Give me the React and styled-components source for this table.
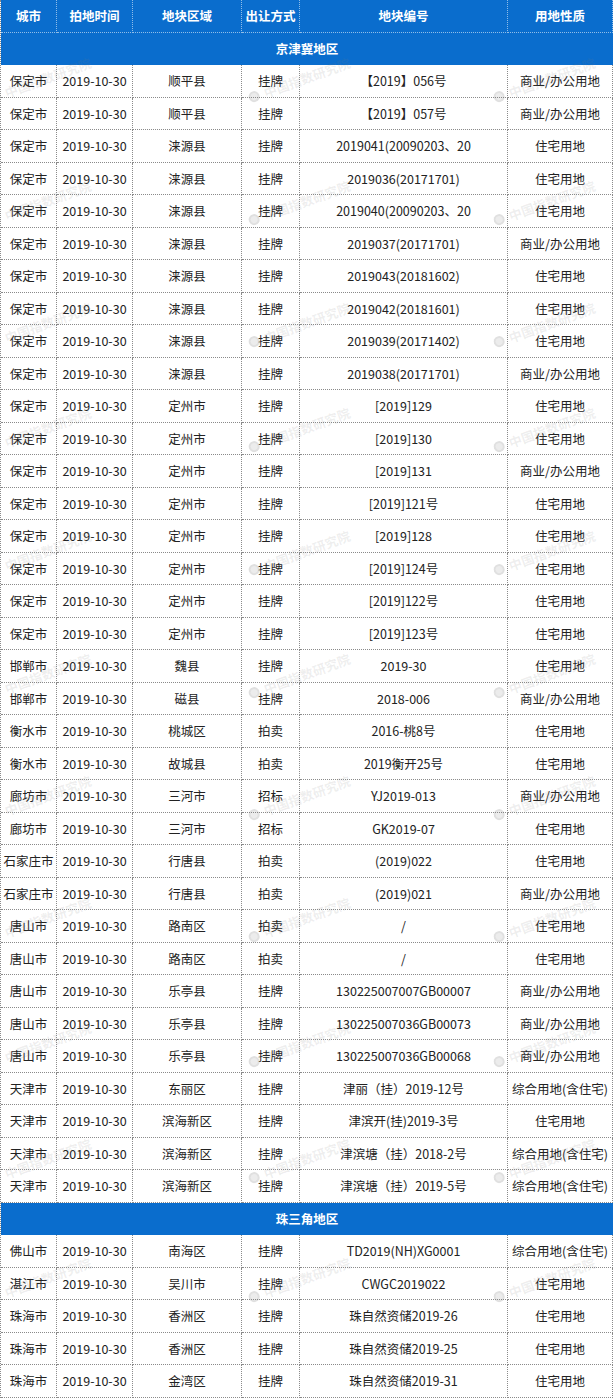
import React from "react";
import styled, { createGlobalStyle } from "styled-components";

const JJJ = [
  ["保定市", "顺平县", "挂牌", "【2019】056号", "商业/办公用地"],
  ["保定市", "顺平县", "挂牌", "【2019】057号", "商业/办公用地"],
  ["保定市", "涞源县", "挂牌", "2019041(20090203、20", "住宅用地"],
  ["保定市", "涞源县", "挂牌", "2019036(20171701)", "住宅用地"],
  ["保定市", "涞源县", "挂牌", "2019040(20090203、20", "住宅用地"],
  ["保定市", "涞源县", "挂牌", "2019037(20171701)", "商业/办公用地"],
  ["保定市", "涞源县", "挂牌", "2019043(20181602)", "住宅用地"],
  ["保定市", "涞源县", "挂牌", "2019042(20181601)", "住宅用地"],
  ["保定市", "涞源县", "挂牌", "2019039(20171402)", "住宅用地"],
  ["保定市", "涞源县", "挂牌", "2019038(20171701)", "商业/办公用地"],
  ["保定市", "定州市", "挂牌", "[2019]129", "住宅用地"],
  ["保定市", "定州市", "挂牌", "[2019]130", "住宅用地"],
  ["保定市", "定州市", "挂牌", "[2019]131", "商业/办公用地"],
  ["保定市", "定州市", "挂牌", "[2019]121号", "住宅用地"],
  ["保定市", "定州市", "挂牌", "[2019]128", "住宅用地"],
  ["保定市", "定州市", "挂牌", "[2019]124号", "住宅用地"],
  ["保定市", "定州市", "挂牌", "[2019]122号", "住宅用地"],
  ["保定市", "定州市", "挂牌", "[2019]123号", "住宅用地"],
  ["邯郸市", "魏县", "挂牌", "2019-30", "住宅用地"],
  ["邯郸市", "磁县", "挂牌", "2018-006", "商业/办公用地"],
  ["衡水市", "桃城区", "拍卖", "2016-桃8号", "住宅用地"],
  ["衡水市", "故城县", "拍卖", "2019衡开25号", "住宅用地"],
  ["廊坊市", "三河市", "招标", "YJ2019-013", "商业/办公用地"],
  ["廊坊市", "三河市", "招标", "GK2019-07", "住宅用地"],
  ["石家庄市", "行唐县", "拍卖", "(2019)022", "住宅用地"],
  ["石家庄市", "行唐县", "拍卖", "(2019)021", "商业/办公用地"],
  ["唐山市", "路南区", "拍卖", "/", "住宅用地"],
  ["唐山市", "路南区", "拍卖", "/", "住宅用地"],
  ["唐山市", "乐亭县", "挂牌", "130225007007GB00007", "商业/办公用地"],
  ["唐山市", "乐亭县", "挂牌", "130225007036GB00073", "商业/办公用地"],
  ["唐山市", "乐亭县", "挂牌", "130225007036GB00068", "商业/办公用地"],
  ["天津市", "东丽区", "挂牌", "津丽（挂）2019-12号", "综合用地(含住宅)"],
  ["天津市", "滨海新区", "挂牌", "津滨开(挂)2019-3号", "住宅用地"],
  ["天津市", "滨海新区", "挂牌", "津滨塘（挂）2018-2号", "综合用地(含住宅)"],
  ["天津市", "滨海新区", "挂牌", "津滨塘（挂）2019-5号", "综合用地(含住宅)"],
];

const PRD = [
  ["佛山市", "南海区", "挂牌", "TD2019(NH)XG0001", "综合用地(含住宅)"],
  ["湛江市", "吴川市", "挂牌", "CWGC2019022", "住宅用地"],
  ["珠海市", "香洲区", "挂牌", "珠自然资储2019-26", "住宅用地"],
  ["珠海市", "香洲区", "挂牌", "珠自然资储2019-25", "住宅用地"],
  ["珠海市", "金湾区", "挂牌", "珠自然资储2019-31", "住宅用地"],
];

const HEAD = ["城市", "拍地时间", "地块区域", "出让方式", "地块编号", "用地性质"];

// watermark positions (dot centre)
const MARK_ROWS = [97, 220, 342, 447, 570, 693, 815, 937, 1062, 1178, 1297];
const MARK_COLS = [-4, 255, 500];

const GlobalStyle = createGlobalStyle`
  html, body {
    margin: 0;
    padding: 0;
    background: #fff;
  }
  body {
    font-family: "Microsoft YaHei", "Noto Sans CJK SC", "Noto Sans", sans-serif;
  }
`;

const Sheet = styled.div`
  position: relative;
  width: 613px;
  overflow: hidden;
`;

const Grid = styled.div`
  display: grid;
  grid-template-columns: 56px 76px 109px 58px 208px 105px;
  grid-auto-rows: 32.5px;
  border-left: 1px dotted #8a8a8a;
`;

const Cell = styled.div`
  display: flex;
  align-items: center;
  justify-content: center;
  white-space: nowrap;
  overflow: hidden;
  box-sizing: border-box;
  font-size: 12.5px;
  color: #222;
  border-right: 1px dotted #8a8a8a;
  border-bottom: 1px dotted #8a8a8a;
`;

const HeadCell = styled(Cell)`
  background: #0a6dcd;
  color: #fff;
  font-weight: 700;
  border-right-color: rgba(255, 255, 255, 0.55);
  border-bottom-color: rgba(255, 255, 255, 0.55);
`;

const Region = styled(Cell)`
  grid-column: 1 / -1;
  background: #0a6dcd;
  color: #fff;
  font-weight: 700;
  border-right: none;
  border-bottom: none;
`;

const Mark = styled.div`
  position: absolute;
  display: flex;
  align-items: center;
  gap: 5px;
  transform: rotate(-20deg);
  transform-origin: left center;
  pointer-events: none;
  color: rgba(120, 120, 120, 0.13);
  font-size: 13px;
  font-weight: 700;
  white-space: nowrap;
`;

const MarkDot = styled.span`
  width: 11px;
  height: 11px;
  border-radius: 50%;
  border: 2px solid rgba(120, 120, 120, 0.1);
  background: rgba(120, 120, 120, 0.14);
  box-sizing: border-box;
`;

function Rows({ data }) {
  return data.map((r, i) => (
    <React.Fragment key={i}>
      <Cell>{r[0]}</Cell>
      <Cell>2019-10-30</Cell>
      <Cell>{r[1]}</Cell>
      <Cell>{r[2]}</Cell>
      <Cell>{r[3]}</Cell>
      <Cell>{r[4]}</Cell>
    </React.Fragment>
  ));
}

export default function App() {
  return (
    <Sheet>
      <GlobalStyle />
      <Grid>
        {HEAD.map((h) => (
          <HeadCell key={h}>{h}</HeadCell>
        ))}
        <Region>京津冀地区</Region>
        <Rows data={JJJ} />
        <Region>珠三角地区</Region>
        <Rows data={PRD} />
      </Grid>
      {MARK_ROWS.map((y) =>
        MARK_COLS.map((x) => (
          <Mark key={`${x}-${y}`} style={{ left: x - 6, top: y - 8 }}>
            <MarkDot />
            中国指数研究院
          </Mark>
        ))
      )}
    </Sheet>
  );
}
